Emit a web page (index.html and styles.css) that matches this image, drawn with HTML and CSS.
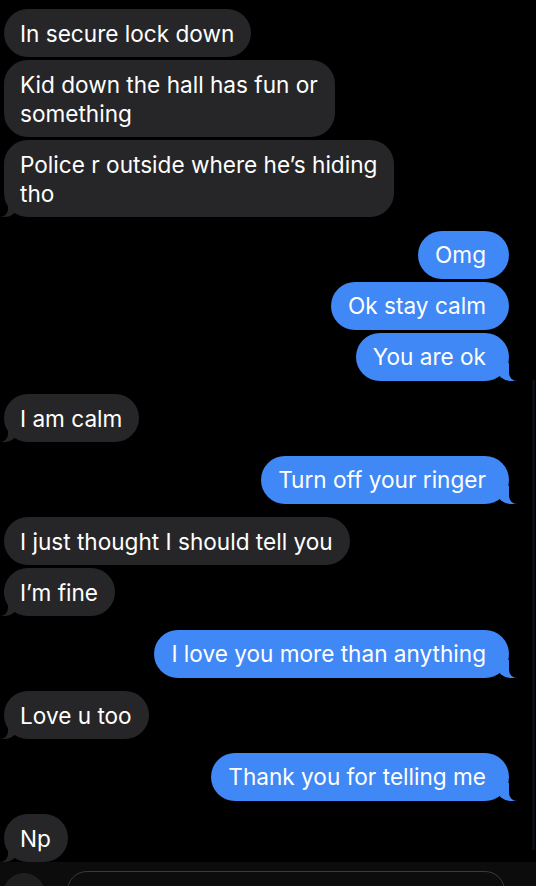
FILE: index.html
```html
<!DOCTYPE html>
<html>
<head>
<meta charset="utf-8">
<link rel="stylesheet" href="styles.css">
</head>
<body>
<div class="thread">
  <div class="group recv">
    <div class="bubble">In secure lock down</div>
    <div class="bubble">Kid down the hall has fun or<br>something</div>
    <div class="bubble tail">Police r outside where he’s hiding<br>tho</div>
  </div>
  <div class="group sent">
    <div class="bubble">Omg</div>
    <div class="bubble">Ok stay calm</div>
    <div class="bubble tail">You are ok</div>
  </div>
  <div class="group recv">
    <div class="bubble tail">I am calm</div>
  </div>
  <div class="group sent">
    <div class="bubble tail">Turn off your ringer</div>
  </div>
  <div class="group recv">
    <div class="bubble">I just thought I should tell you</div>
    <div class="bubble tail">I’m fine</div>
  </div>
  <div class="group sent">
    <div class="bubble tail">I love you more than anything</div>
  </div>
  <div class="group recv">
    <div class="bubble tail">Love u too</div>
  </div>
  <div class="group sent">
    <div class="bubble tail">Thank you for telling me</div>
  </div>
  <div class="group recv">
    <div class="bubble tail">Np</div>
  </div>
</div>
<div class="composer">
  <div class="plus"></div>
  <div class="field"></div>
</div>
<div class="scrollbar"></div>
</body>
</html>
```

FILE: styles.css
```css
html {
  margin: 0;
  padding: 0;
  background: #000;
}
body {
  margin: 0;
  padding: 0;
  width: 536px;
  height: 886px;
  overflow: hidden;
  font-family: "Inter", "Roboto", "Liberation Sans", sans-serif;
  color: #fff;
}
.thread {
  display: flex;
  flex-direction: column;
  gap: 13.5px;
  padding: 9px 27px 0 4px;
}
.group {
  display: flex;
  flex-direction: column;
  gap: 3px;
}
.recv { align-items: flex-start; }
.sent { align-items: flex-end; }
.bubble {
  position: relative;
  font-size: 22.6px;
  line-height: 29px;
  padding: 9.5px 16px;
  border-radius: 24px;
  white-space: nowrap;
}
.recv .bubble {
  background: #262628;
  padding-right: 17px;
}
.sent .bubble {
  background: #3f88f5;
  padding-left: 17px;
  padding-right: 23px;
}

.bubble.tail::before,
.bubble.tail::after {
  content: "";
  position: absolute;
  bottom: 0;
  height: 18px;
  z-index: -1;
}
.recv .bubble.tail::before {
  left: -4px;
  width: 18px;
  background: #262628;
  border-bottom-right-radius: 14px 12px;
}
.recv .bubble.tail::after {
  left: -12px;
  width: 16px;
  background: #000;
  border-bottom-right-radius: 8px;
}
.sent .bubble.tail::before {
  right: -8px;
  width: 20px;
  background: #3f88f5;
  border-bottom-left-radius: 14px 12px;
}
.sent .bubble.tail::after {
  right: -16px;
  width: 16px;
  background: #000;
  border-bottom-left-radius: 8px;
}

.composer {
  position: fixed;
  left: 0;
  right: 0;
  bottom: 0;
  height: 24px;
  background: #0c0c0d;
  display: flex;
  align-items: flex-start;
  gap: 22px;
  padding: 11px 31px 0 3px;
  box-sizing: border-box;
}
.plus {
  width: 42px;
  height: 42px;
  border-radius: 50%;
  background: #1f1f21;
  flex: none;
}
.field {
  flex: 1;
  height: 40px;
  border: 1px solid #3a3a3c;
  border-radius: 20px;
  margin-top: -2px;
}
.scrollbar {
  position: fixed;
  right: 1px;
  top: 380px;
  width: 3px;
  height: 470px;
  background: #0a0d12;
}
```
